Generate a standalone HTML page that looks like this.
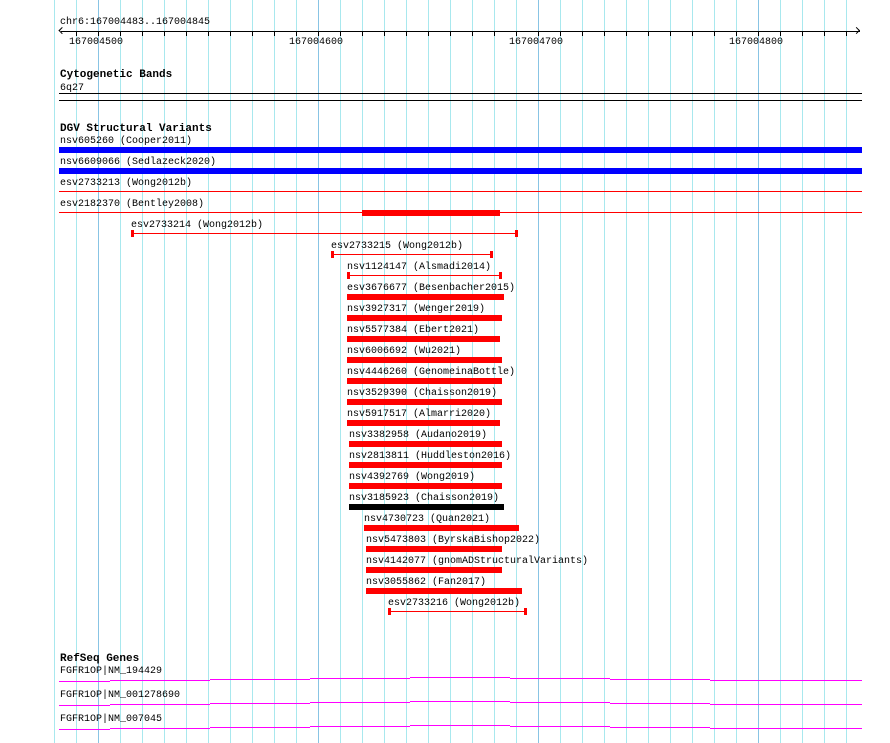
<!DOCTYPE html>
<html><head><meta charset="utf-8"><style>
body{margin:0;width:890px;height:743px;background:#fff;position:relative;overflow:hidden;font-family:"Liberation Mono","DejaVu Sans Mono",monospace;font-size:10px;color:#000}
div{position:absolute}
.t{white-space:pre;line-height:12px;margin-top:2px}
.h{font-weight:bold;font-size:11px;white-space:pre;line-height:12px;margin-top:1px}
.r{background:#f00}
.g{position:absolute;top:0;height:743px;width:1px;background:#a8e8ee}
.d{background:#88c4e4}
</style></head><body>
<div style="left:54px;top:0;width:795px;height:743px;background:repeating-linear-gradient(to right,#a8e8ee 0 1px,transparent 1px 22px)"></div>
<div class="g d" style="left:98px"></div><div class="g d" style="left:318px"></div><div class="g d" style="left:538px"></div><div class="g d" style="left:758px"></div>

<div class="t" style="left:60px;top:15px">chr6:167004483..167004845</div>
<div style="left:61px;top:31px;width:799px;height:1px;background:#000"></div>
<div style="left:62px;top:27px;width:4px;height:4px;border-left:1px solid #000;border-bottom:1px solid #000;transform:rotate(45deg);transform-origin:0 0"></div>
<div style="left:854px;top:28px;width:4px;height:4px;border-right:1px solid #000;border-top:1px solid #000;transform:rotate(45deg)"></div>
<div style="left:76px;top:31px;width:772px;height:5px;background:repeating-linear-gradient(to right,#000 0 1px,transparent 1px 22px)"></div>
<div class="t" style="left:69px;top:35px">167004500</div>
<div class="t" style="left:289px;top:35px">167004600</div>
<div class="t" style="left:509px;top:35px">167004700</div>
<div class="t" style="left:729px;top:35px">167004800</div>

<div class="h" style="left:60px;top:68px">Cytogenetic Bands</div>
<div class="t" style="left:60px;top:81px">6q27</div>
<div style="left:59px;top:93px;width:803px;height:1px;background:#000"></div>
<div style="left:59px;top:100px;width:803px;height:1px;background:#000"></div>

<div class="h" style="left:60px;top:122px">DGV Structural Variants</div>
<div class="t" style="left:60px;top:134px">nsv605260 (Cooper2011)</div>
<div style="left:59px;top:147px;width:803px;height:6px;background:#00f"></div>
<div class="t" style="left:60px;top:155px">nsv6609066 (Sedlazeck2020)</div>
<div style="left:59px;top:168px;width:803px;height:6px;background:#00f"></div>
<div class="t" style="left:60px;top:176px">esv2733213 (Wong2012b)</div>
<div class="r" style="left:59px;top:191px;width:803px;height:1px"></div>
<div class="t" style="left:60px;top:197px">esv2182370 (Bentley2008)</div>
<div class="r" style="left:59px;top:212px;width:803px;height:1px"></div>
<div class="r" style="left:362px;top:210px;width:138px;height:6px"></div>

<div class="t" style="left:131px;top:218px">esv2733214 (Wong2012b)</div>
<div class="r" style="left:131px;top:233px;width:387px;height:1px"></div>
<div class="r" style="left:131px;top:230px;width:3px;height:7px"></div><div class="r" style="left:515px;top:230px;width:3px;height:7px"></div>
<div class="t" style="left:331px;top:239px">esv2733215 (Wong2012b)</div>
<div class="r" style="left:332px;top:254px;width:161px;height:1px"></div>
<div class="r" style="left:331px;top:251px;width:3px;height:7px"></div><div class="r" style="left:490px;top:251px;width:3px;height:7px"></div>
<div class="t" style="left:347px;top:260px">nsv1124147 (Alsmadi2014)</div>
<div class="r" style="left:348px;top:275px;width:153px;height:1px"></div>
<div class="r" style="left:347px;top:272px;width:3px;height:7px"></div><div class="r" style="left:499px;top:272px;width:3px;height:7px"></div>

<div class="t" style="left:347px;top:281px">esv3676677 (Besenbacher2015)</div>
<div class="r" style="left:347px;top:294px;width:157px;height:6px"></div>
<div class="t" style="left:347px;top:302px">nsv3927317 (Wenger2019)</div>
<div class="r" style="left:347px;top:315px;width:155px;height:6px"></div>
<div class="t" style="left:347px;top:323px">nsv5577384 (Ebert2021)</div>
<div class="r" style="left:347px;top:336px;width:153px;height:6px"></div>
<div class="t" style="left:347px;top:344px">nsv6006692 (Wu2021)</div>
<div class="r" style="left:347px;top:357px;width:155px;height:6px"></div>
<div class="t" style="left:347px;top:365px">nsv4446260 (GenomeinaBottle)</div>
<div class="r" style="left:347px;top:378px;width:155px;height:6px"></div>
<div class="t" style="left:347px;top:386px">nsv3529390 (Chaisson2019)</div>
<div class="r" style="left:347px;top:399px;width:155px;height:6px"></div>
<div class="t" style="left:347px;top:407px">nsv5917517 (Almarri2020)</div>
<div class="r" style="left:347px;top:420px;width:153px;height:6px"></div>
<div class="t" style="left:349px;top:428px">nsv3382958 (Audano2019)</div>
<div class="r" style="left:349px;top:441px;width:153px;height:6px"></div>
<div class="t" style="left:349px;top:449px">nsv2813811 (Huddleston2016)</div>
<div class="r" style="left:349px;top:462px;width:153px;height:6px"></div>
<div class="t" style="left:349px;top:470px">nsv4392769 (Wong2019)</div>
<div class="r" style="left:349px;top:483px;width:153px;height:6px"></div>
<div class="t" style="left:349px;top:491px">nsv3185923 (Chaisson2019)</div>
<div style="left:349px;top:504px;width:155px;height:6px;background:#000"></div>
<div class="t" style="left:364px;top:512px">nsv4730723 (Quan2021)</div>
<div class="r" style="left:364px;top:525px;width:155px;height:6px"></div>
<div class="t" style="left:366px;top:533px">nsv5473803 (ByrskaBishop2022)</div>
<div class="r" style="left:366px;top:546px;width:136px;height:6px"></div>
<div class="t" style="left:366px;top:554px">nsv4142077 (gnomADStructuralVariants)</div>
<div class="r" style="left:366px;top:567px;width:136px;height:6px"></div>
<div class="t" style="left:366px;top:575px">nsv3055862 (Fan2017)</div>
<div class="r" style="left:366px;top:588px;width:156px;height:6px"></div>
<div class="t" style="left:388px;top:596px">esv2733216 (Wong2012b)</div>
<div class="r" style="left:389px;top:611px;width:138px;height:1px"></div>
<div class="r" style="left:388px;top:608px;width:3px;height:7px"></div><div class="r" style="left:524px;top:608px;width:3px;height:7px"></div>

<div class="h" style="left:60px;top:652px">RefSeq Genes</div>
<div class="t" style="left:60px;top:664px">FGFR1OP|NM_194429</div>
<div class="t" style="left:60px;top:688px">FGFR1OP|NM_001278690</div>
<div class="t" style="left:60px;top:712px">FGFR1OP|NM_007045</div>
<svg width="890" height="743" style="position:absolute;left:0;top:0" shape-rendering="crispEdges">
<g stroke="#f0f" stroke-width="1" fill="none">
<path d="M59 681.5H110M110 680.5H210M210 679.5H310M310 678.5H410M410 677.5H510M510 678.5H610M610 679.5H710M710 680.5H862"/>
<path d="M59 705.5H110M110 704.5H210M210 703.5H310M310 702.5H410M410 701.5H510M510 702.5H610M610 703.5H710M710 704.5H862"/>
<path d="M59 729.5H110M110 728.5H210M210 727.5H310M310 726.5H410M410 725.5H510M510 726.5H610M610 727.5H710M710 728.5H862"/>
</g></svg>
</body></html>
